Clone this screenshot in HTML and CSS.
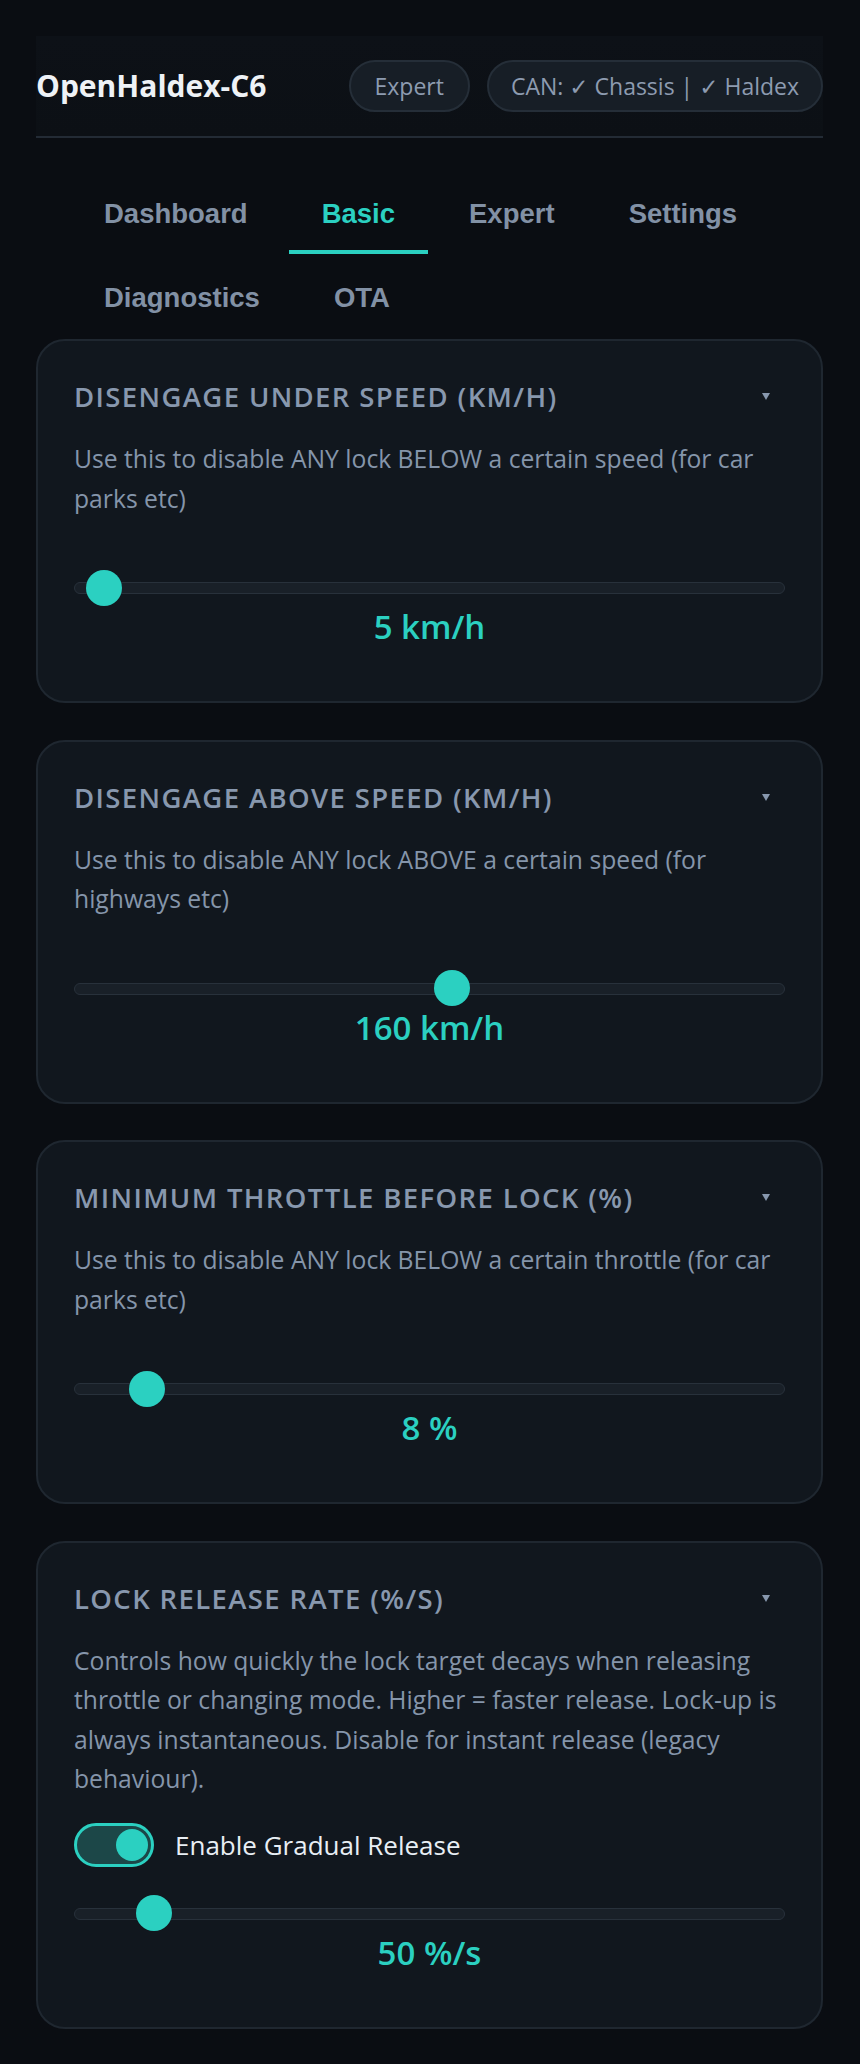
FILE: index.html
```html
<!DOCTYPE html>
<html lang="en">
<head>
<meta charset="utf-8">
<title>OpenHaldex-C6 – Basic</title>
<link rel="stylesheet" href="styles.css">
</head>
<body>
<div class="page">
  <header class="topbar">
    <h1 class="brand">OpenHaldex-C6</h1>
    <div class="badges">
      <span class="pill">Expert</span>
      <span class="pill">CAN: ✓ Chassis | ✓ Haldex</span>
    </div>
  </header>

  <nav class="tabs">
    <button class="tab" type="button">Dashboard</button>
    <button class="tab active" type="button">Basic</button>
    <button class="tab" type="button">Expert</button>
    <button class="tab" type="button">Settings</button>
    <button class="tab" type="button">Diagnostics</button>
    <button class="tab" type="button">OTA</button>
  </nav>

  <main class="cards">
    <section class="card">
      <div class="card-head">
        <h2 class="card-title">DISENGAGE UNDER SPEED (KM/H)</h2>
        <span class="caret"></span>
      </div>
      <p class="card-desc">Use this to disable ANY lock BELOW a certain speed (for car parks etc)</p>
      <input class="range" type="range" min="0" max="300" value="5">
      <div class="value">5 km/h</div>
    </section>

    <section class="card">
      <div class="card-head">
        <h2 class="card-title">DISENGAGE ABOVE SPEED (KM/H)</h2>
        <span class="caret"></span>
      </div>
      <p class="card-desc">Use this to disable ANY lock ABOVE a certain speed (for highways etc)</p>
      <input class="range" type="range" min="0" max="300" value="160">
      <div class="value">160 km/h</div>
    </section>

    <section class="card">
      <div class="card-head">
        <h2 class="card-title">MINIMUM THROTTLE BEFORE LOCK (%)</h2>
        <span class="caret"></span>
      </div>
      <p class="card-desc">Use this to disable ANY lock BELOW a certain throttle (for car parks etc)</p>
      <input class="range" type="range" min="0" max="100" value="8">
      <div class="value">8 %</div>
    </section>

    <section class="card">
      <div class="card-head">
        <h2 class="card-title">LOCK RELEASE RATE (%/S)</h2>
        <span class="caret"></span>
      </div>
      <p class="card-desc">Controls how quickly the lock target decays when releasing throttle or changing mode. Higher = faster release. Lock-up is always instantaneous. Disable for instant release (legacy behaviour).</p>
      <label class="switch-row">
        <span class="switch"><span class="knob"></span></span>
        <span class="switch-label">Enable Gradual Release</span>
      </label>
      <input class="range" type="range" min="5" max="500" value="50">
      <div class="value">50 %/s</div>
    </section>
  </main>
</div>
</body>
</html>
```
FILE: styles.css
```css
* { box-sizing: border-box; }

html, body {
  margin: 0;
  background: #0a0d12;
}

body {
  font-family: "Open Sans", "Noto Sans", "DejaVu Sans", sans-serif;
  color: #8796ab;
}

.page {
  padding: 36px 37px 36px 36px;
}

/* Header */
.topbar {
  display: flex;
  align-items: center;
  justify-content: space-between;
  padding: 24px 0;
  background: linear-gradient(180deg, #0d1117 0%, #0c1015 100%);
  border-bottom: 2px solid #232b35;
}

.brand {
  margin: 0;
  font-size: 30px;
  font-weight: 700;
  color: #eef2f6;
  line-height: 1.2;
}

.badges {
  display: flex;
  gap: 17px;
}

.pill {
  display: inline-flex;
  align-items: center;
  height: 52px;
  padding: 0 24px;
  border: 2px solid #252e38;
  border-radius: 999px;
  background: #171e26;
  color: #8d9bb0;
  font-size: 23px;
  white-space: nowrap;
}

.pill + .pill {
  padding: 0 22px;
}

/* Tabs */
.tabs {
  display: flex;
  flex-wrap: wrap;
  gap: 8px;
  padding: 40px 0 0 35px;
}

.tab {
  font-family: "Liberation Sans", Arial, sans-serif;
  font-weight: 700;
  font-size: 27.5px;
  padding: 20px 33px;
  border: 0;
  border-bottom: 4px solid transparent;
  background: none;
  color: #8291a5;
  cursor: pointer;
}

.tab.active {
  color: #2bd0c1;
  border-bottom-color: #2bd0c1;
}

/* Cards */
.cards {
  display: flex;
  flex-direction: column;
  gap: 36.5px;
  margin-top: 1px;
}

.card {
  display: flex;
  flex-direction: column;
  padding: 37px 36px 36px;
  background: #11171e;
  border: 2px solid #1f2730;
  border-radius: 29px;
}

.card-head {
  display: flex;
  align-items: center;
  justify-content: space-between;
}

.card-title {
  margin: 0;
  font-size: 27.5px;
  font-weight: 600;
  letter-spacing: 0.05em;
  color: #8898ae;
  line-height: normal;
}

.caret {
  width: 0;
  height: 0;
  margin-right: 15px;
  border-left: 4.5px solid transparent;
  border-right: 4.5px solid transparent;
  border-top: 7px solid #8898ae;
}

.card-desc {
  margin: 24px 0;
  font-size: 24.7px;
  line-height: 39.5px;
  color: #8595aa;
}

/* Toggle */
.switch-row {
  display: flex;
  align-items: center;
  gap: 21px;
  height: 45px;
  cursor: pointer;
}

.switch {
  display: flex;
  align-items: center;
  justify-content: flex-end;
  width: 80px;
  height: 44px;
  padding: 0 3px;
  border: 3px solid #2bd0c1;
  border-radius: 22px;
  background: #1c4748;
}

.knob {
  width: 32px;
  height: 32px;
  border-radius: 50%;
  background: #2bd0c1;
}

.switch-label {
  font-size: 26px;
  color: #e8eef4;
}

/* Range slider */
.range {
  -webkit-appearance: none;
  appearance: none;
  display: block;
  width: 100%;
  height: 36px;
  margin: 28px 0 0;
  padding: 0;
  background: transparent;
}

.range::-webkit-slider-runnable-track {
  height: 12px;
  background: #192028;
  border: 1.5px solid #28313b;
  border-radius: 6px;
}

.range::-webkit-slider-thumb {
  -webkit-appearance: none;
  appearance: none;
  width: 36px;
  height: 36px;
  margin-top: -13.5px;
  border: 0;
  border-radius: 50%;
  background: #2bd0c1;
}

.value {
  margin: -2px 0 16px;
  text-align: center;
  font-size: 33px;
  font-weight: 600;
  color: #2bd0c1;
  line-height: normal;
}
```
